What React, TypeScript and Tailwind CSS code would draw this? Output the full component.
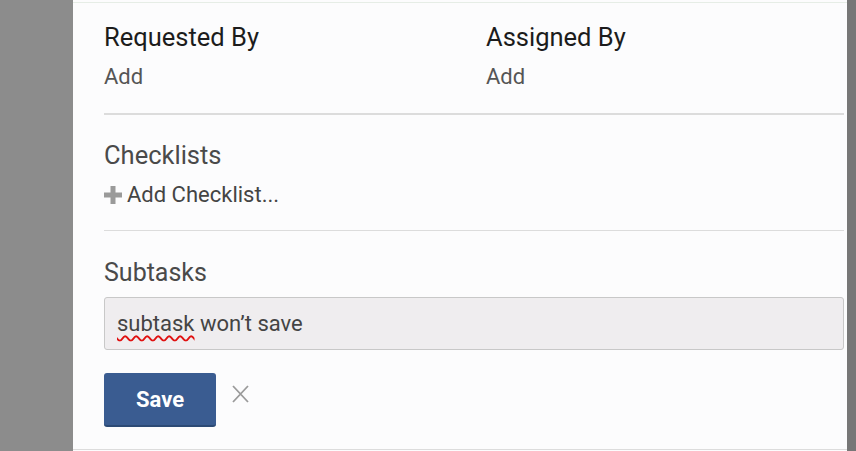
import React from 'react';

const font = { fontFamily: 'Roboto, "Open Sans", sans-serif' };

// Section divider that spans the content column
const Divider: React.FC<{ thick?: boolean }> = ({ thick }) => (
  <div className={thick ? 'h-[2px] bg-[#dcdcdc]' : 'h-px bg-[#dcdcdc]'} />
);

const PlusIcon = () => (
  <svg width="18" height="18" viewBox="0 0 18 18" className="shrink-0">
    <rect x="6.5" y="0" width="5" height="18" fill="#9a9a9a" />
    <rect x="0" y="6.5" width="18" height="5" fill="#9a9a9a" />
  </svg>
);

const CloseIcon = () => (
  <svg width="17" height="18" viewBox="0 0 17 18">
    <path d="M1 1 L16 17 M16 1 L1 17" stroke="#9a9a9a" strokeWidth="1.8" fill="none" />
  </svg>
);

const App: React.FC = () => {
  return (
    <div className="flex h-[451px] w-[856px] overflow-hidden bg-[#8b8b8b]" style={font}>
      {/* grey backdrop on the left */}
      <div className="w-[73px] shrink-0 bg-[#8c8c8c]" />

      {/* task details panel */}
      <div className="flex w-[774px] shrink-0 flex-col bg-[#fcfcfd]">
        <div className="mt-[2px] h-px bg-[#e6ede6]" />
        <div className="flex flex-1 flex-col pl-[31px] pr-[3px]">
          {/* people */}
          <div className="grid grid-cols-[382px_1fr] pt-[19px]">
            <div>
              <div className="text-[25.5px] leading-[30px] text-[#1c1c1c]">Requested By</div>
              <div className="mt-[12px] text-[22px] leading-[26px] text-[#555555]">Add</div>
            </div>
            <div>
              <div className="text-[25.5px] leading-[30px] text-[#1c1c1c]">Assigned By</div>
              <div className="mt-[12px] text-[22px] leading-[26px] text-[#555555]">Add</div>
            </div>
          </div>
          <div className="mt-[23px]">
            <Divider thick />
          </div>

          {/* checklists */}
          <div className="mt-[25px] text-[25.5px] leading-[30px] text-[#4a4a4a]">Checklists</div>
          <div className="mt-[12px] flex items-center gap-[5px] text-[22px] leading-[26px] text-[#444444]">
            <PlusIcon />
            <span>Add Checklist...</span>
          </div>
          <div className="mt-[22px]">
            <Divider />
          </div>

          {/* subtasks */}
          <div className="mt-[27px] text-[25px] leading-[30px] text-[#4a4a4a]">Subtasks</div>
          <div className="mt-[9px] flex h-[53px] items-center rounded-[3px] border border-[#c8c8c8] bg-[#efedef] px-[12px] text-[22px] leading-[26px] text-[#444444]">
            <span className="underline decoration-wavy decoration-[#e01010] decoration-[1.5px] underline-offset-[4px]">subtask</span>
            <span>&nbsp;won’t save</span>
          </div>
          <div className="mt-[23px] flex items-start gap-[16px]">
            <button className="h-[54px] w-[112px] rounded-[3px] border-b-2 border-[#2c4a75] bg-[#3a5c91] text-[22px] font-bold text-white">
              Save
            </button>
            <div className="mt-[12px]">
              <CloseIcon />
            </div>
          </div>
        </div>
        <div className="mb-[1px] h-px bg-[#dcdcdc]" />
      </div>

      {/* scrollbar strip on the right */}
      <div className="w-[9px] shrink-0 bg-[#777777]" />
    </div>
  );
};

export default App;
